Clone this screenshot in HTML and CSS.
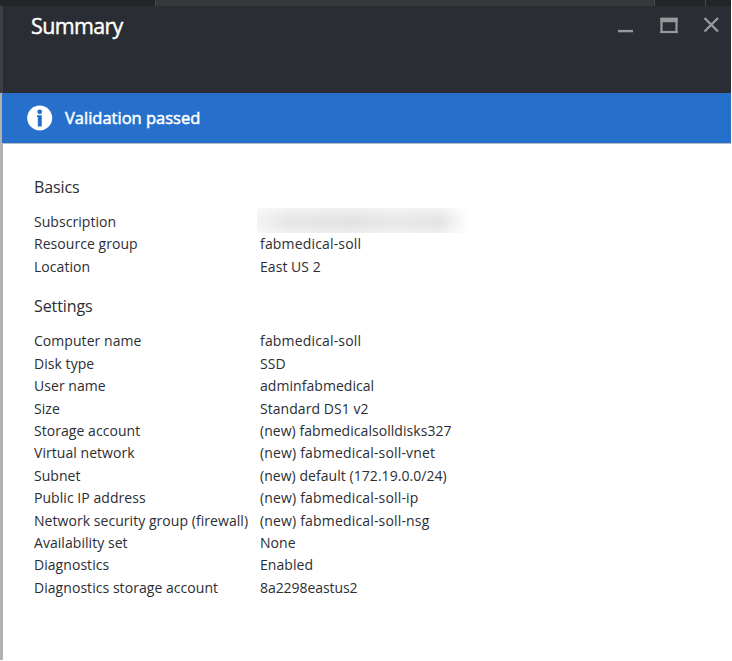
FILE: index.html
```
<!DOCTYPE html>
<html lang="en">
<head>
<meta charset="utf-8">
<title>Summary</title>
<link rel="stylesheet" href="styles.css">
</head>
<body>
<div class="window">
  <div class="tabs"><span class="tab tab-first"></span><span class="tab tab-active"></span><span class="tab tab-mid"></span><span class="tab tab-last"></span></div>
  <header class="header">
    <h1 class="title">Summary</h1>
    <svg class="controls" width="104" height="20" viewBox="0 0 104 20" fill="none" stroke="#97999b">
      <path d="M0 15.1H15" stroke-width="2.4"/>
      <path d="M43.5 2V16H58.5V2" stroke-width="2.2"/>
      <path d="M42.4 3.9H59.6" stroke-width="4.6"/>
      <path d="M42.4 16H59.6" stroke-width="2.2"/>
      <path d="M86.5 2L100 15.5M100 2L86.5 15.5" stroke-width="2.4"/>
    </svg>
  </header>
  <div class="banner">
    <svg class="info" width="26" height="26" viewBox="0 0 26 26">
      <circle cx="12.7" cy="13" r="12.5" fill="#fff"/>
      <circle cx="12.7" cy="6.8" r="2.4" fill="#2670cb"/>
      <path d="M10 10.3H14.8V21.4H10.8V12.1H10Z" fill="#2670cb"/>
    </svg>
    <span class="message">Validation passed</span>
  </div>
  <main class="content">
    <h2 class="heading">Basics</h2>
    <dl class="list basics">
      <dt>Subscription</dt><dd><span class="redacted"></span></dd>
      <dt>Resource group</dt><dd class="hyphenated">fabmedical-soll</dd>
      <dt>Location</dt><dd>East US 2</dd>
    </dl>
    <h2 class="heading">Settings</h2>
    <dl class="list">
      <dt>Computer name</dt><dd class="hyphenated">fabmedical-soll</dd>
      <dt>Disk type</dt><dd>SSD</dd>
      <dt>User name</dt><dd>adminfabmedical</dd>
      <dt>Size</dt><dd>Standard DS1 v2</dd>
      <dt>Storage account</dt><dd>(new) fabmedicalsolldisks327</dd>
      <dt>Virtual network</dt><dd class="hyphenated">(new) fabmedical-soll-vnet</dd>
      <dt>Subnet</dt><dd>(new) default (172.19.0.0/24)</dd>
      <dt>Public IP address</dt><dd class="hyphenated">(new) fabmedical-soll-ip</dd>
      <dt>Network security group (firewall)</dt><dd class="hyphenated">(new) fabmedical-soll-nsg</dd>
      <dt>Availability set</dt><dd>None</dd>
      <dt>Diagnostics</dt><dd>Enabled</dd>
      <dt>Diagnostics storage account</dt><dd class="compact">8a2298eastus2</dd>
    </dl>
  </main>
</div>
</body>
</html>
```
FILE: styles.css
```
* { box-sizing: border-box; }
body { margin: 0; background: #fff; font-family: "Open Sans", "Noto Sans", sans-serif; color: #2b2e33; overflow: hidden; }
.window { width: 731px; height: 660px; display: flex; flex-direction: column; }
.tabs { display: flex; gap: 1px; height: 6px; background: #45494c; }
.tab { background: #202528; }
.tab-first { width: 155px; }
.tab-active { width: 498px; background: #33383b; }
.tab-mid { width: 50px; }
.tab-last { flex: 1; }
.header { display: flex; justify-content: space-between; height: 87px; padding: 0 9px 0 28px; background: #2a2e34; border-left: 3px solid #3c3f43; }
.title { margin: 4px 0 0; font-size: 21.5px; font-weight: 400; line-height: 32px; letter-spacing: -0.65px; color: #fff; -webkit-text-stroke: 0.4px #fff; }
.controls { margin-top: 10px; }
.banner { display: flex; align-items: center; height: 51px; padding: 0 0 0 25px; background: #2670cb; border-left: 2px solid #b0b0b0; border-bottom: 1px solid #b8bcc2; }
.message { margin: 0 0 2px 12px; font-size: 16.5px; color: #fff; -webkit-text-stroke: 0.5px #fff; }
.content { flex: 1; padding: 31px 0 0 31px; border-left: 3px solid #b2b2b2; }
.heading { margin: 0 0 12px; font-size: 16px; font-weight: 400; line-height: 24px; letter-spacing: -0.1px; }
.list { display: grid; grid-template-columns: 226px 1fr; grid-auto-rows: 22.43px; margin: 0; font-size: 14px; line-height: 22.4px; letter-spacing: 0.05px; white-space: nowrap; }
.basics { margin-bottom: 16px; }
dt, dd { margin: 0; }
.hyphenated { letter-spacing: 0.17px; }
.compact { letter-spacing: -0.07px; }
.redacted { display: block; width: 212px; height: 25px; margin: -3px 0 0 -3px; background: linear-gradient(to bottom, rgba(255,255,255,.5), rgba(255,255,255,0) 45%, rgba(255,255,255,0) 65%, rgba(255,255,255,.4)), linear-gradient(to right, #f3f3f3, #e7e7e8 14%, #e3e3e4 45%, #e9e9e9 65%, #e5e5e5 86%, #fff); }
```
